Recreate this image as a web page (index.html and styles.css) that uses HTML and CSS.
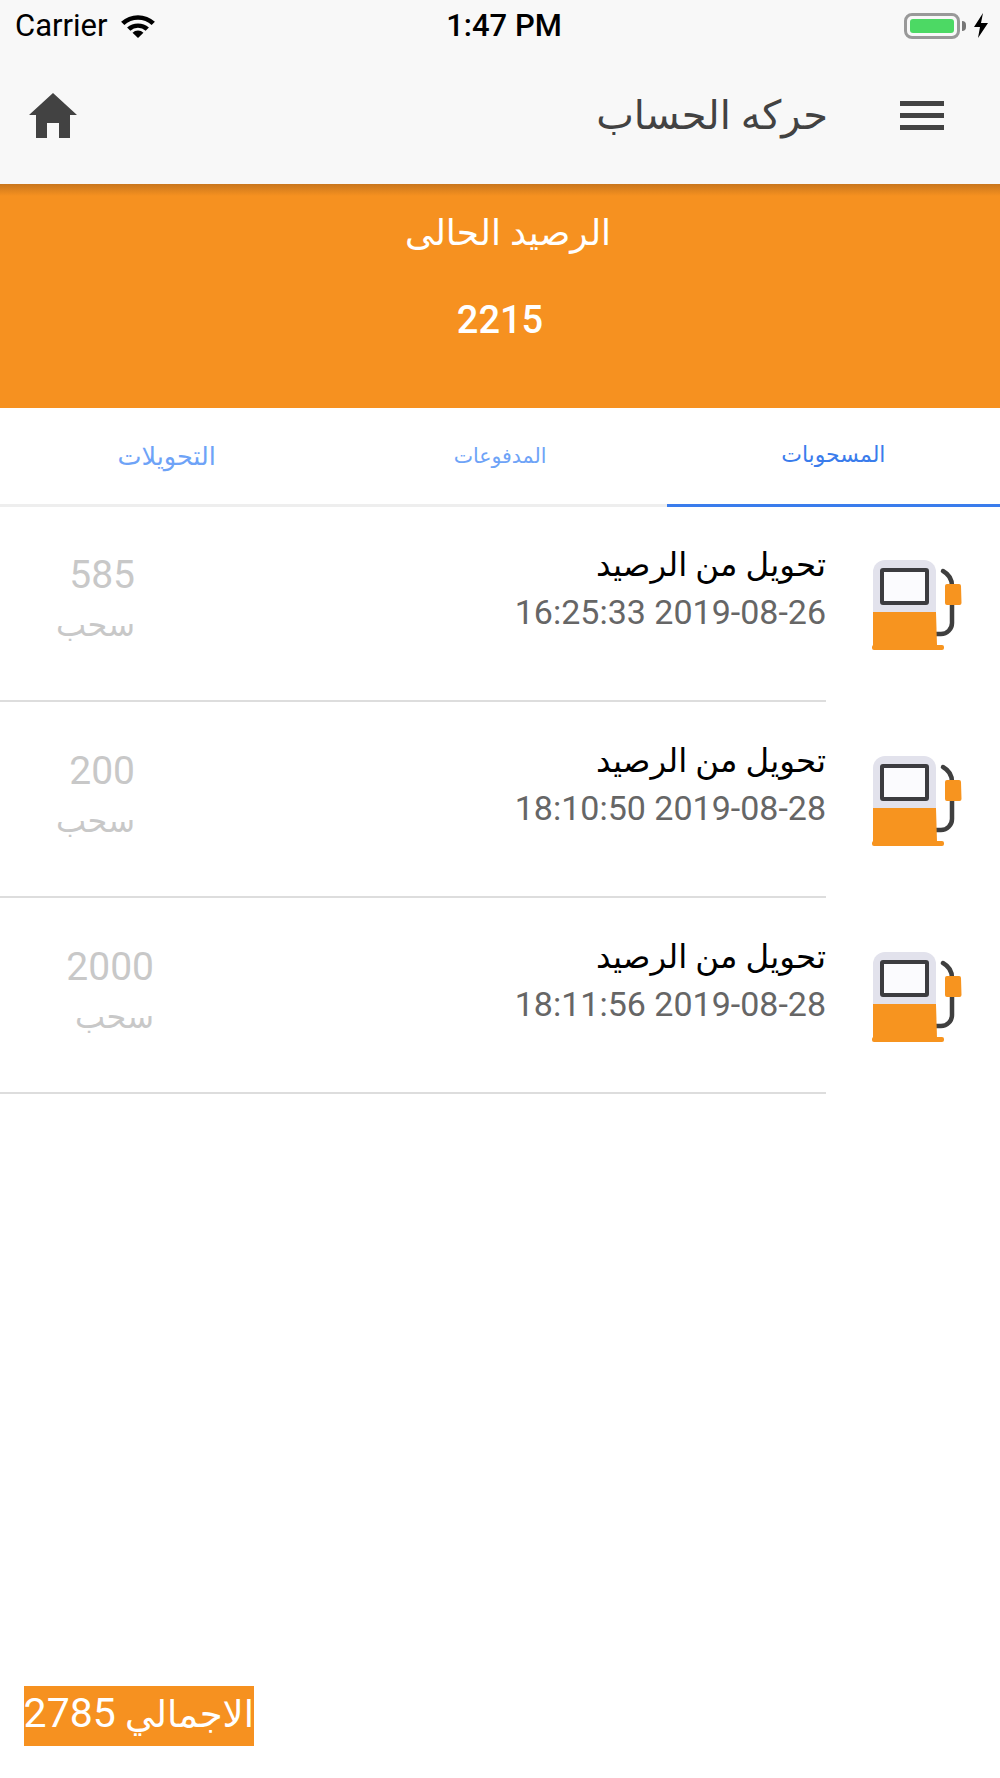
FILE: index.html
```html
<!DOCTYPE html>
<html lang="ar">
<head>
    <meta charset="UTF-8">
    <title>حركه الحساب</title>
    <link rel="stylesheet" href="styles.css">
</head>
<body>
    <svg class="defs" width="0" height="0">
        <symbol id="pump" viewBox="0 0 90 92">
            <path d="M71 12Q80 17 80 27V64A11 11 0 0 1 69 75H64" fill="none" stroke="#3f3f3f" stroke-width="4.5" stroke-linecap="round"/>
            <path d="M1 86V13A12 12 0 0 1 13 1H52A12 12 0 0 1 64 13V86z" fill="#e2e2ec"/>
            <rect x="10" y="11" width="45" height="33" rx="1" fill="#fbfbfe" stroke="#3c3c40" stroke-width="4"/>
            <path d="M1 53H64L65 87H1z" fill="#f7941f"/>
            <rect y="86" width="72" height="5" rx="2" fill="#f7941f"/>
            <path d="M73 27a2 2 0 0 1 2-2H87a2 2 0 0 1 2 2l.5 17a2 2 0 0 1-2 2H75a2 2 0 0 1-2-2z" fill="#f7941f"/>
        </symbol>
    </svg>

    <div class="app">
        <div class="status-bar" dir="ltr">
            <div class="status-left">
                <span>Carrier</span>
                <svg class="wifi" width="36" height="25" viewBox="0 0 33 24" preserveAspectRatio="none">
                    <path d="M1 8.5a22 22 0 0 1 31 0l-3 3a18 18 0 0 0-25 0z"/>
                    <path d="M6.500 14a14.500 14.500 0 0 1 20 0l-3 3a10 10 0 0 0-14 0z"/>
                    <path d="M11.500 19a7 7 0 0 1 10 0l-5 5z"/>
                </svg>
            </div>
            <div class="status-time">1:47 PM</div>
            <div class="status-right">
                <div class="battery"><div class="battery-fill"></div></div>
                <div class="battery-tip"></div>
                <svg class="bolt" width="16" height="25" viewBox="0 0 16 25">
                    <path d="M10 0L1 14h6l-2 11 10-15H8z"/>
                </svg>
            </div>
        </div>

        <div class="toolbar">
            <svg class="menu-icon" width="44" height="29" viewBox="0 0 44 29">
                <rect width="44" height="5"/>
                <rect y="12" width="44" height="5"/>
                <rect y="24" width="44" height="5"/>
            </svg>
            <div class="toolbar-title">حركه الحساب</div>
            <svg class="home-icon" width="48" height="45" viewBox="0 0 48 45">
                <path d="M24 0L48 22h-7v23H30V30H18v15H7V22H0z"/>
            </svg>
        </div>

        <div class="balance">
            <div class="balance-label">الرصيد الحالى</div>
            <div class="balance-value">2215</div>
        </div>

        <div class="tabs">
            <div class="tab active">المسحوبات</div>
            <div class="tab tab-narrow">المدفوعات</div>
            <div class="tab tab-wide">التحويلات</div>
        </div>

        <div class="list">
            <div class="row">
                <svg class="pump"><use href="#pump"/></svg>
                <div class="row-body">
                    <div class="row-info">
                        <div class="row-title">تحويل من الرصيد</div>
                        <div class="row-date">2019-08-26 16:25:33</div>
                    </div>
                    <div class="row-amount">
                        <div class="amount">585</div>
                        <div class="amount-type">سحب</div>
                    </div>
                </div>
            </div>
            <div class="row">
                <svg class="pump"><use href="#pump"/></svg>
                <div class="row-body">
                    <div class="row-info">
                        <div class="row-title">تحويل من الرصيد</div>
                        <div class="row-date">2019-08-28 18:10:50</div>
                    </div>
                    <div class="row-amount">
                        <div class="amount">200</div>
                        <div class="amount-type">سحب</div>
                    </div>
                </div>
            </div>
            <div class="row">
                <svg class="pump"><use href="#pump"/></svg>
                <div class="row-body">
                    <div class="row-info">
                        <div class="row-title">تحويل من الرصيد</div>
                        <div class="row-date">2019-08-28 18:11:56</div>
                    </div>
                    <div class="row-amount wide">
                        <div class="amount">2000</div>
                        <div class="amount-type">سحب</div>
                    </div>
                </div>
            </div>
        </div>

        <div class="total">الاجمالي <span class="total-num">2785</span></div>
    </div>
</body>
</html>
```

FILE: styles.css
```css
* {
    box-sizing: border-box;
}
body {
    margin: 0;
    background-color: #fff;
    font-family: Roboto, "DejaVu Sans", sans-serif;
}
.defs {
    position: absolute;
}
.app {
    direction: rtl;
    width: 1000px;
    height: 1778px;
    display: flex;
    flex-direction: column;
    overflow: hidden;
}
.status-bar {
    height: 50px;
    flex: none;
    display: flex;
    align-items: center;
    padding: 1px 11px 0 15px;
    background-color: #f8f8f8;
    color: #000;
    font-size: 31px;
}
.status-left, .status-right {
    flex: 1;
    display: flex;
    align-items: center;
}
.status-left {
    gap: 12px;
}
.status-right {
    justify-content: flex-end;
}
.status-time {
    padding-left: 4px;
    font-weight: 500;
}
.battery {
    width: 56px;
    height: 26px;
    padding: 3px;
    border: 3px solid #999;
    border-radius: 8px;
}
.battery-fill {
    height: 100%;
    background-color: #4cd964;
    border-radius: 3px;
}
.battery-tip {
    width: 4px;
    height: 10px;
    margin: 0 7px 0 2px;
    background-color: #777;
    border-radius: 0 5px 5px 0;
}
.toolbar {
    height: 134px;
    flex: none;
    display: flex;
    align-items: center;
    padding: 0 56px 4px 29px;
    background-color: #f8f8f8;
    color: #424242;
}
.menu-icon, .home-icon {
    fill: #424242;
    flex: none;
}
.toolbar-title {
    flex: 1;
    margin-right: 72px;
    font-size: 40px;
}
.balance {
    height: 224px;
    flex: none;
    padding-top: 26px;
    background: linear-gradient(#c9761c, #f69120 12px);
    color: #fff;
    text-align: center;
}
.balance-label {
    padding-left: 16px;
    font-size: 36px;
    line-height: 46px;
}
.balance-value {
    margin-top: 43px;
    font-size: 38px;
    font-weight: 500;
    line-height: 42px;
}
.tabs {
    height: 99px;
    flex: none;
    display: flex;
    border-bottom: 3px solid #eee;
}
.tab {
    flex: 1;
    display: flex;
    align-items: center;
    justify-content: center;
    margin-bottom: -3px;
    padding-bottom: 3px;
    font-size: 22px;
    color: #6ea3f7;
}
.tab-narrow {
    font-size: 20.5px;
}
.tab-wide {
    font-size: 25.5px;
}
.tab.active {
    color: #3a7cec;
    border-bottom: 3px solid #3a7cec;
}
.list {
    flex: 1;
    margin-top: -1px;
}
.row {
    height: 196px;
    display: flex;
}
.pump {
    width: 90px;
    height: 92px;
    flex: none;
    margin: 53px 38px 0 46px;
}
.row-body {
    flex: 1;
    display: flex;
    justify-content: space-between;
    padding-top: 36px;
    border-bottom: 2px solid #ddd;
}
.row-title {
    font-size: 32.5px;
    line-height: 47px;
    color: #000;
}
.row-date {
    font-size: 34px;
    line-height: 46px;
    color: #666;
}
.row-amount {
    width: 135px;
    padding-top: 7px;
    color: #c8c8c8;
}
.row-amount.wide {
    width: 154px;
}
.amount {
    font-size: 39px;
    line-height: 52px;
}
.amount-type {
    font-size: 32px;
    line-height: 48px;
}
.total {
    flex: none;
    align-self: flex-end;
    width: 230px;
    height: 60px;
    margin: 0 0 32px 24px;
    background-color: #f69120;
    color: #fff;
    font-size: 37px;
    line-height: 54px;
    text-align: center;
    white-space: nowrap;
}
.total-num {
    font-size: 41px;
}
```
